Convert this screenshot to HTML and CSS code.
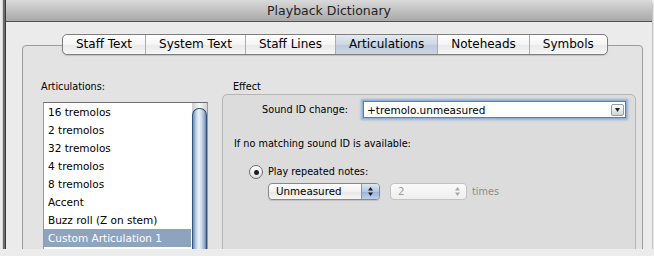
FILE: index.html
```html
<!DOCTYPE html>
<html lang="en">
<head>
  <meta charset="UTF-8">
  <title>Playback Dictionary</title>
  <link rel="stylesheet" href="styles.css">
</head>
<body>

  <div class="window">
    <div class="titlebar">Playback Dictionary</div>

    <div class="content">
      <div class="tabview">
        <div class="tabs">
          <div class="tab">Staff Text</div>
          <div class="tab">System Text</div>
          <div class="tab">Staff Lines</div>
          <div class="tab active">Articulations</div>
          <div class="tab">Noteheads</div>
          <div class="tab">Symbols</div>
        </div>

        <div class="panel">
          <div class="left">
            <div class="label">Articulations:</div>
            <div class="listbox">
              <div class="items">
                <div class="item">16 tremolos</div>
                <div class="item">2 tremolos</div>
                <div class="item">32 tremolos</div>
                <div class="item">4 tremolos</div>
                <div class="item">8 tremolos</div>
                <div class="item">Accent</div>
                <div class="item">Buzz roll (Z on stem)</div>
                <div class="item selected">Custom Articulation 1</div>
              </div>
              <div class="scroller"><div class="thumb"></div></div>
            </div>
          </div>

          <div class="right">
            <div class="label group-title">Effect</div>
            <div class="group">
              <div class="field-row">
                <div class="label field-label">Sound ID change:</div>
                <div class="combo">
                  <span>+tremolo.unmeasured</span>
                  <span class="combo-btn">
                    <svg width="5" height="4" viewBox="0 0 5 4"><polygon points="0,0 5,0 2.5,4" fill="#222"/></svg>
                  </span>
                </div>
              </div>

              <div class="label note">If no matching sound ID is available:</div>

              <div class="radio-row">
                <span class="radio"><span class="dot"></span></span>
                <span class="label">Play repeated notes:</span>
              </div>

              <div class="popup-row">
                <div class="popup">
                  <span class="value">Unmeasured</span>
                  <span class="arrows">
                    <svg width="7" height="11" viewBox="0 0 7 11"><polygon points="3.5,1 6,4.5 1,4.5" fill="#1c1c1c"/><polygon points="1,6.5 6,6.5 3.5,10" fill="#1c1c1c"/></svg>
                  </span>
                </div>
                <div class="popup disabled">
                  <span class="value">2</span>
                  <span class="arrows">
                    <svg width="7" height="11" viewBox="0 0 7 11"><polygon points="3.5,1 6,4.5 1,4.5" fill="#a8a8a8"/><polygon points="1,6.5 6,6.5 3.5,10" fill="#a8a8a8"/></svg>
                  </span>
                </div>
                <span class="label times">times</span>
              </div>
            </div>
          </div>
        </div>
      </div>
    </div>
  </div>

</body>
</html>
```

FILE: styles.css
```css
body {
  margin: 0;
  background: #ececec;
  font-family: "DejaVu Sans", sans-serif;
  color: #000;
}

.window {
  margin-left: 6px;
  width: 646px;
  height: 249px;
  overflow: hidden;
  background: #ebebeb;
  box-shadow: -1px 0 0 #3c3c3c, -3px 0 1px #6a6a6a, 0 2px 0 #4a4a4a, 0 3px 2px rgba(0, 0, 0, 0.5);
}

.titlebar {
  height: 21px;
  line-height: 21px;
  border-bottom: 1px solid #535353;
  background: linear-gradient(#dadada, #a8a8a8);
  text-align: center;
  font-size: 12.5px;
  color: #1e1e1e;
}

.content {
  padding: 12px 9px 0 16px;
}

.tabview {
  display: flex;
  flex-direction: column;
}

/* segmented tab control sitting over the panel border */
.tabs {
  display: flex;
  align-self: flex-start;
  margin-left: 40px;
  position: relative;
  z-index: 1;
  height: 19px;
  border: 1px solid #7e7e7e;
  border-radius: 5px;
  background: linear-gradient(#ffffff, #f4f4f4 50%, #e9e9e9 51%, #f6f6f6);
  box-shadow: 0 1px 1px rgba(0, 0, 0, 0.15);
  overflow: hidden;
}

.tab {
  padding: 0 13px;
  font-size: 12px;
  line-height: 19px;
  border-left: 1px solid #acacac;
}

.tab:first-child {
  border-left: none;
}

.tab.active {
  background: linear-gradient(#e4eaf1, #cdd7e3 50%, #bcc9d8 51%, #cbd6e3);
}

.panel {
  margin-top: -10px;
  height: 220px;
  border: 1px solid #9c9c9c;
  border-radius: 4px 4px 0 0;
  background: #e3e3e3;
  padding: 34px 0 0 18px;
  display: grid;
  grid-template-columns: 167px 414px;
  column-gap: 14px;
  align-items: start;
}

.label {
  font-size: 9.7px;
  line-height: 14px;
}

.listbox {
  margin: 8px 0 0 2px;
  width: 165px;
  height: 160px;
  box-sizing: border-box;
  border: 1px solid #9a9a9a;
  border-top-color: #6e6e6e;
  background: #fff;
  display: flex;
}

.items {
  flex: 1;
}

.item {
  height: 18px;
  line-height: 18px;
  padding-left: 4px;
  margin-right: 1px;
  font-size: 10.5px;
  white-space: nowrap;
}

.item.selected {
  background: #8ea3be;
  color: #fff;
}

.scroller {
  width: 15px;
  padding-top: 5px;
  background: linear-gradient(to right, #cfcfcf, #f7f7f7 50%, #d2d2d2);
}

.thumb {
  height: 100%;
  box-sizing: border-box;
  border: 1px solid #34547e;
  border-bottom: none;
  border-radius: 7px 7px 0 0;
  background: linear-gradient(to right, #6f8db3, #c3d3e6 25%, #eef4fa 45%, #cddbeb 65%, #8fa8c8 90%, #5d7ca5);
}

.group-title {
  padding-left: 11px;
}

.group {
  height: 200px;
  border: 1px solid #b5b5b5;
  border-radius: 5px;
  background: #dcdcdc;
  padding-top: 6px;
}

.field-row {
  display: flex;
  align-items: center;
  gap: 15px;
}

.field-label {
  width: 125px;
  text-align: right;
}

.combo {
  width: 263px;
  height: 17px;
  box-sizing: border-box;
  border: 1px solid #7a7a7a;
  background: #fff;
  box-shadow: 0 0 0 1px #8cb0da, 0 0 2px 2px rgba(80, 140, 215, 0.5);
  display: flex;
  align-items: center;
  justify-content: space-between;
  padding: 0 1px 0 3px;
  font-size: 10.5px;
}

.combo-btn {
  width: 13px;
  height: 12px;
  box-sizing: border-box;
  border: 1px solid #9c9c9c;
  border-radius: 2px;
  background: linear-gradient(#fdfdfd, #d4d4d4);
  display: flex;
  align-items: center;
  justify-content: center;
}

.note {
  margin: 19px 0 0 11px;
}

.radio-row {
  display: flex;
  align-items: center;
  gap: 5px;
  margin: 14px 0 0 26px;
}

.radio {
  width: 14px;
  height: 14px;
  box-sizing: border-box;
  border: 1px solid #6c6c6c;
  border-radius: 50%;
  background: linear-gradient(#ffffff, #dedede);
  display: flex;
  align-items: center;
  justify-content: center;
}

.dot {
  width: 5px;
  height: 5px;
  border-radius: 50%;
  background: #1e1e1e;
}

.popup-row {
  display: flex;
  align-items: center;
  margin: 4px 0 0 45px;
}

.popup {
  width: 112px;
  height: 17px;
  box-sizing: border-box;
  border: 1px solid #898989;
  border-radius: 4px;
  background: linear-gradient(#ffffff, #f2f2f2 50%, #e6e6e6 51%, #f7f7f7);
  display: flex;
  font-size: 10.3px;
  box-shadow: 0 1px 1px rgba(0, 0, 0, 0.12);
}

.popup .value {
  flex: 1;
  padding-left: 7px;
  line-height: 15px;
}

.popup .arrows {
  width: 17px;
  border-left: 1px solid #8697ad;
  border-radius: 0 3px 3px 0;
  background: linear-gradient(#dce7f4, #b3c8e4 50%, #94b1da 51%, #bfd2ec);
  display: flex;
  align-items: center;
  justify-content: center;
}

.popup.disabled {
  width: 77px;
  margin-left: 10px;
  border-color: #c3c3c3;
  background: linear-gradient(#fafafa, #efefef);
  color: #9c9c9c;
  box-shadow: none;
}

.popup.disabled .arrows {
  border-left: none;
  background: none;
}

.times {
  margin-left: 5px;
  color: #8c8c8c;
}
```
